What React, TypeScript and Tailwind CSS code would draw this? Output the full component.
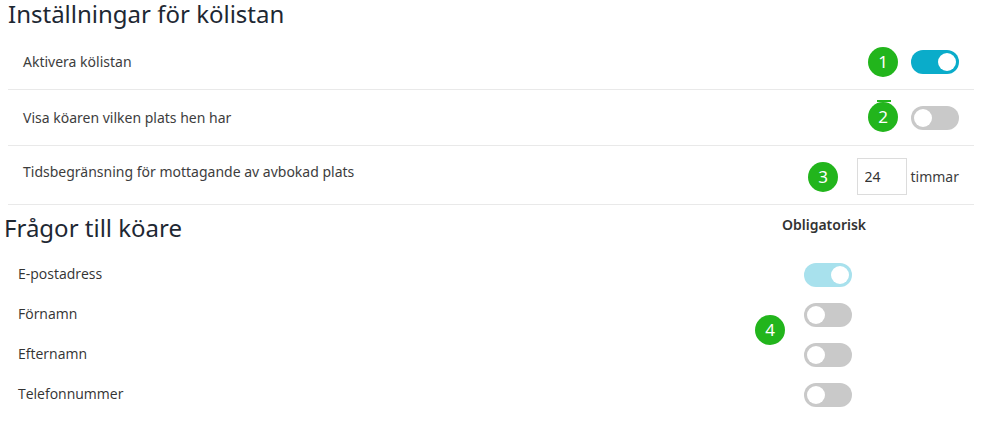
import { useState } from 'react';

const Badge = ({ n, className }: { n: number; className: string }) => (
  <span
    className={`absolute flex h-[30px] w-[30px] items-center justify-center rounded-full bg-[#22b51c] text-[17px] text-white ${className}`}
  >
    {n}
  </span>
);

const Toggle = ({
  on,
  light,
  onClick,
}: {
  on: boolean;
  light?: boolean;
  onClick?: () => void;
}) => (
  <button
    type="button"
    onClick={onClick}
    className={`flex h-[24px] w-[48px] shrink-0 items-center rounded-full px-[3px] ${
      on ? (light ? 'justify-end bg-[#a8e1ed]' : 'justify-end bg-[#0aacca]') : 'justify-start bg-[#c9c9c9]'
    }`}
  >
    <span className="h-[18px] w-[18px] rounded-full bg-white" />
  </button>
);

export default function App() {
  const [active, setActive] = useState(true);
  const [showPlace, setShowPlace] = useState(false);
  const [fields, setFields] = useState([true, false, false, false]);
  const labels = ['E-postadress', 'Förnamn', 'Efternamn', 'Telefonnummer'];

  return (
    <div className="h-[425px] w-[987px] bg-white font-['Noto_Sans',sans-serif] text-[#3d3d3d]">
      <div className="pl-2 pr-[13px]">
        <h2 className="h-[34px] text-[24px] leading-[28px] text-[#1e2833]">
          Inställningar för kölistan
        </h2>
        <div className="relative flex h-[56px] items-center justify-between border-b border-[#e9e9e9] px-[15px] text-[14px]">
          <span>Aktivera kölistan</span>
          <Toggle on={active} onClick={() => setActive(!active)} />
          <Badge n={1} className="right-[76px] top-[13px]" />
        </div>
        <div className="relative flex h-[56px] items-center justify-between border-b border-[#e9e9e9] px-[15px] text-[14px]">
          <span>Visa köaren vilken plats hen har</span>
          <Toggle on={showPlace} onClick={() => setShowPlace(!showPlace)} />
          <span className="absolute right-[83px] top-[10px] h-[2px] w-[14px] bg-[#22b51c]" />
          <Badge n={2} className="right-[76px] top-[12px]" />
        </div>
        <div className="relative flex h-[59px] items-center justify-between border-b border-[#e9e9e9] px-[15px] text-[14px]">
          <span className="-mt-[8px]">Tidsbegränsning för mottagande av avbokad plats</span>
          <div className="flex items-center gap-[4px]">
            <input
              defaultValue="24"
              className="mt-[2px] h-[37px] w-[50px] border border-[#dcdcdc] px-[7px] text-[14px] text-[#333] outline-none"
            />
            <span className="mt-[3px]">timmar</span>
          </div>
          <Badge n={3} className="right-[136px] top-[16px]" />
        </div>
      </div>

      <div className="relative flex pl-1 pt-[8px]">
        <div className="flex-1">
          <h2 className="h-[34px] text-[24px] leading-[30px] text-[#1e2833]">Frågor till köare</h2>
          <div className="pl-[14px] pt-[6px] font-['Open_Sans',sans-serif] text-[14px] text-[#333]">
            {labels.map((l) => (
              <div key={l} className="flex h-[40px] items-center">
                {l}
              </div>
            ))}
          </div>
        </div>
        <div className="mr-[111px] flex w-[96px] flex-col items-center">
          <div className="h-[34px] pr-[8px] pt-[1px] text-[14px] font-semibold text-[#333]">Obligatorisk</div>
          <div className="pt-[8px]">
            {fields.map((f, i) => (
              <div key={i} className="flex h-[40px] items-center">
                <Toggle
                  on={f}
                  light
                  onClick={() => setFields(fields.map((x, j) => (j === i ? !x : x)))}
                />
              </div>
            ))}
          </div>
        </div>
        <Badge n={4} className="left-[755px] top-[110px]" />
      </div>
    </div>
  );
}
